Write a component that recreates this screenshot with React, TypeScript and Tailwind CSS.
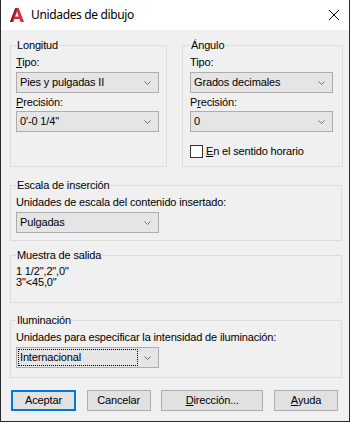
import type { ReactNode } from 'react'

const ui = "font-['Liberation_Sans',Arial,sans-serif] text-[11px] tracking-[-0.15px] text-black"

function Key({ children }: { children: ReactNode }) {
  return <span className="underline decoration-1 underline-offset-[1px]">{children}</span>
}

function Chevron() {
  return (
    <svg width="7" height="4" viewBox="0 0 7 4" className="shrink-0">
      <polyline points="0.5,0.5 3.5,3.5 6.5,0.5" fill="none" stroke="#6d6d6d" strokeWidth="1" />
    </svg>
  )
}

function Combo({ value, focused }: { value: string; focused?: boolean }) {
  return (
    <div className="h-[21px] w-[143px] flex items-stretch border border-[#adadad] bg-[#e5e5e5] p-[1px]">
      <span
        className={`flex-1 flex items-center pl-[1px] leading-none border ${focused ? 'border-dotted border-black' : 'border-transparent'}`}
      >
        {value}
      </span>
      <span className="w-[19px] flex items-center justify-center">
        <Chevron />
      </span>
    </div>
  )
}

function Group({ title, className, children }: { title: string; className: string; children: ReactNode }) {
  return (
    <fieldset className={`border border-[#dcdcdc] ${className}`}>
      <legend className="px-[1px] leading-[12px]">{title}</legend>
      {children}
    </fieldset>
  )
}

function Button({ children, width, primary }: { children: ReactNode; width: string; primary?: boolean }) {
  return (
    <div
      className={`h-[21px] ${width} flex items-center justify-center bg-[#e1e1e1] leading-none ${primary ? 'border-2 border-[#0078d7]' : 'border border-[#adadad]'}`}
    >
      {children}
    </div>
  )
}

export default function App() {
  return (
    <div className={`w-[350px] h-[422px] bg-[#f0f0f0] border-x border-b border-[#2b2b2b] flex flex-col ${ui}`}>
      <div className="h-[30px] shrink-0 bg-white flex items-center pl-[8px] pr-[10px]">
        <svg width="16" height="16" viewBox="0 0 16 16">
          <path
            fillRule="evenodd"
            d="M1 15 L6.3 1 H9.7 L15 15 H11.6 L10.6 12 H5.4 L4.4 15 Z M6.3 9.6 H9.7 L8 4.8 Z"
            fill="#d0313b"
          />
          <path d="M1 15 L6.3 1 H8 L3.2 15 Z" fill="#8f1b24" />
        </svg>
        <span className="ml-[6px] font-['Noto_Sans',sans-serif] text-[12px] tracking-[-0.35px]">Unidades de dibujo</span>
        <svg width="10" height="10" viewBox="0 0 10 10" className="ml-auto">
          <path d="M0 0 L10 10 M10 0 L0 10" stroke="#000" strokeWidth="1" />
        </svg>
      </div>

      <div className="flex flex-col pl-[9px] pr-[7px]">
        <div className="flex gap-[15px] mt-[9px]">
          <Group title="Longitud" className="w-[157px] pl-[5px] pr-[7px]">
            <div className="mt-[5px] leading-[13px]"><Key>T</Key>ipo:</div>
            <div className="mt-[3px]"><Combo value="Pies y pulgadas II" /></div>
            <div className="mt-[3px] leading-[13px]"><Key>P</Key>recisión:</div>
            <div className="mt-[2px]"><Combo value={"0'-0 1/4\""} /></div>
          </Group>
          <Group title="Ángulo" className="flex-1 pl-[7px] pr-[9px] pb-[8px]">
            <div className="mt-[5px] leading-[13px]">Tipo:</div>
            <div className="mt-[3px]"><Combo value="Grados decimales" /></div>
            <div className="mt-[3px] leading-[13px]">P<Key>r</Key>ecisión:</div>
            <div className="mt-[2px]"><Combo value="0" /></div>
            <div className="mt-[13px] h-[13px] flex items-center gap-[3px]">
              <span className="w-[13px] h-[13px] border border-[#333333] bg-white shrink-0" />
              <span className="leading-[13px]"><Key>E</Key>n el sentido horario</span>
            </div>
          </Group>
        </div>

        <Group title="Escala de inserción" className="mt-[12px] pl-[5px] pb-[7px]">
          <div className="mt-[5px] leading-[13px]">Unidades de escala del contenido insertado:</div>
          <div className="mt-[3px]"><Combo value="Pulgadas" /></div>
        </Group>

        <Group title="Muestra de salida" className="mt-[8px] pl-[5px] pb-[14px]">
          <div className="mt-[5px] leading-[11px]">
            <div>{'1 1/2",2",0"'}</div>
            <div>{'3"<45,0"'}</div>
          </div>
        </Group>

        <Group title="Iluminación" className="mt-[11px] pl-[5px] pb-[9px]">
          <div className="mt-[5px] leading-[13px]">Unidades para especificar la intensidad de iluminación:</div>
          <div className="mt-[3px]"><Combo value="Internacional" focused /></div>
        </Group>

        <div className="mt-[12px] flex justify-between pl-[1px] pr-[4px]">
          <Button width="w-[65px]" primary>Aceptar</Button>
          <Button width="w-[64px]">Cancelar</Button>
          <Button width="w-[102px]"><Key>D</Key>irección...</Button>
          <Button width="w-[64px]"><Key>A</Key>yuda</Button>
        </div>
      </div>
    </div>
  )
}
